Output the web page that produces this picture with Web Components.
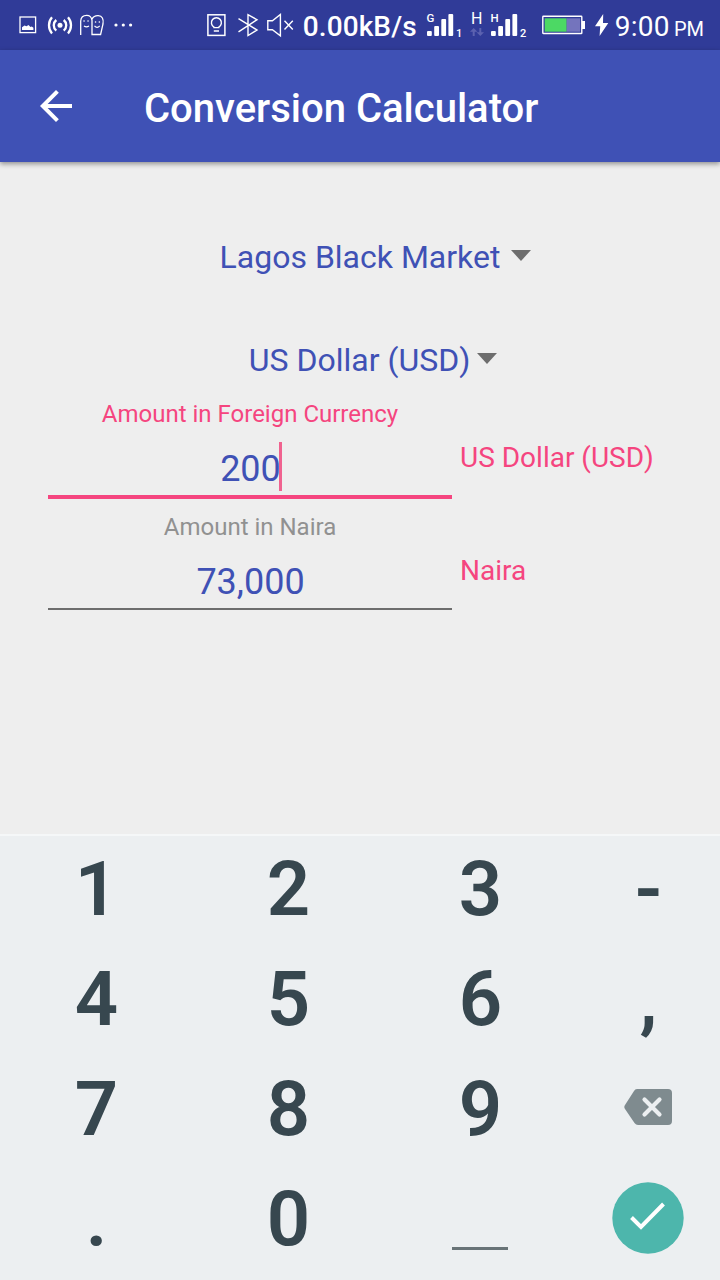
<!DOCTYPE html>
<html lang="en">
<head>
<meta charset="UTF-8">
<title>Conversion Calculator</title>
<style>
  html, body { margin: 0; height: 100%; overflow: hidden; }
  body { font-family: Roboto, "Noto Sans", sans-serif; background: #eeeeee; }
</style>
</head>
<body>
<conversion-app></conversion-app>

<script>
// Small helper: every element gets an open shadow root with its own markup
class BaseElement extends HTMLElement {
  constructor() {
    super();
    this.attachShadow({ mode: 'open' });
  }

  connectedCallback() {
    this.shadowRoot.innerHTML = this.template();
  }
}

// Status bar glyphs, 50px high so they share the bar's vertical coordinates
const STATUS_ICONS = {
  image: [18, `
    <rect x="1" y="17" width="15.6" height="15.6" stroke-width="1.3"/>
    <path d="M3 30v-2.8l2.5-1.8 2 .8 2-1.2 2 2 1.3-.4 1.6 1.1V30z" fill="#fff" stroke="none"/>`],
  hotspot: [24, `
    <circle cx="12" cy="25.3" r="2.5" fill="#fff" stroke="none"/>
    <path d="M8.3 20a6.8 6.8 0 0 0 0 10.6M15.7 20a6.8 6.8 0 0 1 0 10.6M4 17.2c-4 4.5-4 11.7 0 16.2M20 17.2c4 4.5 4 11.7 0 16.2" stroke-width="2.3"/>`],
  faces: [24, `
    <path d="M.7 35V21q.4-5.6 6-5.6 4.6 0 5.3 5v14.1h8.6L23 24q1.2-7.8-4.8-8.3-4.3-.2-6.2 3.4" stroke-width="1.3"/>
    <path d="M4 26q2.4 1.9 5 0M14.5 25.8q2.6 3 5.2 0" stroke-width="1.2"/>
    <path d="M4 21h.1M8 21h.1M15.5 22h.1M19.3 22h.1" stroke-width="1.5" stroke-linecap="round"/>`],
  more: [20, `
    <g fill="#fff" stroke="none"><circle cx="2" cy="25" r="1.6"/><circle cx="9.3" cy="25" r="1.6"/><circle cx="16.6" cy="25" r="1.6"/></g>`],
  bulb: [19, `
    <rect x=".9" y="14.8" width="17" height="20.6" stroke-width="1.5"/>
    <path d="M7 27.6v-.5a5 5 0 1 1 4.8 0v.5zM6.8 31h5.2" stroke-width="1.4"/>`],
  bluetooth: [21, `
    <path d="M.5 18.6 19 30l-9 5.5V14.7l9 5L.5 31.8" stroke-width="1.4"/>`],
  mute: [27, `
    <path d="M.8 20.7h4.6l8-6.3v21.4l-8-6H.8zM17.5 20.7l8.3 8.8M25.8 20.7l-8.3 8.8" stroke-width="1.4"/>`],
  battery: [43, `
    <rect x=".8" y="16.3" width="39" height="17.2" rx=".6" stroke-width="1.4"/>
    <path d="M40 21h3v8h-3z" fill="#fff" stroke="none"/>
    <path d="M2.7 18.3h22v13.4h-22z" fill="#4cd964" stroke="none"/>
    <path d="M24.7 18.3h13.4v13.4H24.7z" fill="#7474bd" stroke="none"/>`],
  bolt: [14, `
    <path d="M8.2 14 0 26.3h5.2L4.6 36 13.3 23H8z" fill="#fff" stroke="none"/>`],
  arrows: [14, `
    <path d="M3.7 36v-6M10.3 28v6" stroke="#5c62b0" stroke-width="2"/>
    <path d="M0 31.8 3.7 28l3.7 3.8zM6.6 32.2l3.7 3.8 3.7-3.8z" fill="#5c62b0" stroke="none"/>
    <text x="1" y="24" font-size="16">H</text>`]
};

class StatusIcon extends BaseElement {
  template() {
    const [width, body] = STATUS_ICONS[this.getAttribute('name')];
    return `
      <style>
        :host { display: block; flex: none; }
        svg { display: block; overflow: visible; }
        text { fill: #fff; stroke: none; }
      </style>
      <svg width="${width}" height="50" fill="none" stroke="#fff">${body}</svg>
    `;
  }
}
customElements.define('status-icon', StatusIcon);

class SignalMeter extends BaseElement {
  template() {
    const network = this.getAttribute('network');
    const sim = this.getAttribute('sim');
    return `
      <style>
        :host { display: block; flex: none; }
        svg { display: block; overflow: visible; }
      </style>
      <svg width="36" height="50" fill="#fff">
        <rect x="0" y="31" width="4.8" height="5" rx="1"/>
        <rect x="7.2" y="26" width="4.8" height="10" rx="1"/>
        <rect x="14.3" y="19" width="4.8" height="17" rx="1"/>
        <rect x="21.4" y="14" width="4.8" height="22" rx="1"/>
        <text x="-.4" y="22" font-size="11.5" font-weight="500">${network}</text>
        <text x="29" y="36.5" font-size="11" font-weight="500">${sim}</text>
      </svg>
    `;
  }
}
customElements.define('signal-meter', SignalMeter);

class StatusBar extends BaseElement {
  template() {
    return `
      <style>
        :host {
          display: flex;
          height: 50px;
          padding: 0 16px 0 19px;
          box-sizing: border-box;
          background: #303b98;
          color: #fff;
          line-height: 50px;
          white-space: nowrap;
        }
        .left, .right { display: flex; }
        .left { gap: 8px; }
        .left status-icon:first-child { margin-right: 3px; }
        .right { margin-left: auto; }
        .speed { width: 115px; margin: 2px 9px 0; font-size: 28px; font-weight: 500; letter-spacing: 0.1px; }
        .time { margin: 2px 0 0 6px; font-size: 28px; letter-spacing: 0.25px; }
        .time small { font-size: 20px; letter-spacing: 0; margin-left: -3px; }
      </style>
      <div class="left">
        <status-icon name="image"></status-icon>
        <status-icon name="hotspot"></status-icon>
        <status-icon name="faces"></status-icon>
        <status-icon name="more" style="margin-left:2px"></status-icon>
      </div>
      <div class="right">
        <status-icon name="bulb"></status-icon>
        <status-icon name="bluetooth" style="margin-left:12px"></status-icon>
        <status-icon name="mute" style="margin-left:8px"></status-icon>
        <div class="speed">0.00kB/s</div>
        <signal-meter network="G" sim="1"></signal-meter>
        <status-icon name="arrows" style="margin:0 7px"></status-icon>
        <signal-meter network="H" sim="2"></signal-meter>
        <status-icon name="battery" style="margin:0 10px 0 15px"></status-icon>
        <status-icon name="bolt"></status-icon>
        <div class="time">9:00 <small>PM</small></div>
      </div>
    `;
  }
}
customElements.define('status-bar', StatusBar);

class AppToolbar extends BaseElement {
  template() {
    return `
      <style>
        :host {
          display: flex;
          align-items: center;
          height: 112px;
          padding-left: 32px;
          box-sizing: border-box;
          background: #3f51b5;
          color: #fff;
          box-shadow: 0 2px 5px rgba(0,0,0,0.4);
        }
        h1 { margin: 6px 0 0 64px; font-size: 40px; font-weight: 500; line-height: 48px; white-space: nowrap; }
      </style>
      <svg width="48" height="48" viewBox="0 0 24 24" fill="#fff">
        <path d="M20 11H7.83l5.59-5.59L12 4l-8 8 8 8 1.41-1.41L7.83 13H20v-2z"/>
      </svg>
      <h1><slot></slot></h1>
    `;
  }
}
customElements.define('app-toolbar', AppToolbar);

class SpinnerSelect extends BaseElement {
  template() {
    return `
      <style>
        :host {
          display: flex;
          justify-content: center;
          align-items: center;
          height: 48px;
          color: #3f51b5;
          font-size: 32px;
          white-space: nowrap;
        }
        i {
          margin: 0 0 3px var(--arrow-gap, 11px);
          border: 10px solid transparent;
          border-top: 11px solid #6d6d6d;
          border-bottom: 0;
        }
      </style>
      <slot></slot><i></i>
    `;
  }
}
customElements.define('spinner-select', SpinnerSelect);

class AmountField extends BaseElement {
  template() {
    const active = this.hasAttribute('active');
    return `
      <style>
        :host { display: flex; height: 113px; }
        .field { width: 404px; text-align: center; }
        .label { height: 32px; font-size: 24px; line-height: 32px; color: #919191; }
        .value {
          display: flex;
          justify-content: center;
          align-items: center;
          height: 49px;
          margin-top: 12px;
          font-size: 36px;
          color: #3f51b5;
          border-bottom: 2px solid #6d6d6d;
          padding-bottom: 4px;
        }
        .unit { margin: 43px 0 0 8px; font-size: 28px; line-height: 34px; color: #f5457f; white-space: nowrap; }
        .value span { padding: 5px 0 0 1px; }
        .caret { width: 3px; height: 49px; margin: 0 -1px 0 -2px; background: #f0628f; }
        :host([active]) .label { color: #f5457f; }
        :host([active]) .value { border-bottom: 4px solid #f5457f; }
      </style>
      <div class="field">
        <div class="label">${this.getAttribute('label')}</div>
        <div class="value"><span>${this.getAttribute('value')}</span>${active ? '<b class="caret"></b>' : ''}</div>
      </div>
      <div class="unit"><slot></slot></div>
    `;
  }
}
customElements.define('amount-field', AmountField);

class NumberPad extends BaseElement {
  template() {
    const keys = ['1', '2', '3', '-', '4', '5', '6', ',', '7', '8', '9', 'delete', '.', '0', 'space', 'done'];
    const icons = {
      delete: `
        <svg width="48" height="36" style="margin-bottom:4px">
          <path d="M13 0h31q4 0 4 4v28q0 4-4 4H14q-2 0-3.5-2L1 20q-1.4-2 0-4l9-14Q11 0 13 0z" fill="#7f8b8f"/>
          <path d="m20.500 10.500 15 15m0-15-15 15" stroke="#eceff1" stroke-width="4.2" stroke-linecap="round"/>
        </svg>`,
      space: '<i></i>',
      done: `
        <svg width="72" height="72" style="margin-bottom:2px">
          <circle cx="36" cy="36" r="35.7" fill="#4db6ac"/>
          <path d="m19.5 35.5 9.5 9.5 22.5-23" fill="none" stroke="#fff" stroke-width="4"/>
        </svg>`
    };
    return `
      <style>
        :host {
          display: grid;
          grid-template-columns: 192px 192px 192px 144px;
          grid-template-rows: repeat(4, 110px);
          height: 446px;
          box-sizing: border-box;
          background: #eceff1;
          border-top: 2px solid #f5f7f8;
        }
        div {
          display: flex;
          justify-content: center;
          align-items: center;
          height: 106px;
          color: #37474f;
          font-size: 76px;
          font-weight: 600;
          line-height: 106px;
        }
        .text { padding-left: 1px; }
        i { width: 56px; height: 3px; margin-top: 59px; background: #687377; }
      </style>
      ${keys.map(key => icons[key] ? `<div>${icons[key]}</div>` : `<div class="text">${key}</div>`).join('')}
    `;
  }
}
customElements.define('number-pad', NumberPad);

class ConversionApp extends BaseElement {
  template() {
    return `
      <style>
        :host { display: flex; flex-direction: column; width: 720px; height: 1280px; background: #eeeeee; }
        main { flex: 1; padding: 71px 48px 0; }
        .currency { margin: 55px 0 14px; --arrow-gap: 7px; }
      </style>
      <status-bar></status-bar>
      <app-toolbar>Conversion Calculator</app-toolbar>
      <main>
        <spinner-select style="margin-left:31px">Lagos Black Market</spinner-select>
        <spinner-select class="currency" style="margin-left:26px">US Dollar (USD)</spinner-select>
        <amount-field active label="Amount in Foreign Currency" value="200">US Dollar (USD)</amount-field>
        <amount-field label="Amount in Naira" value="73,000">Naira</amount-field>
      </main>
      <number-pad></number-pad>
    `;
  }
}
customElements.define('conversion-app', ConversionApp);
</script>
</body>
</html>
